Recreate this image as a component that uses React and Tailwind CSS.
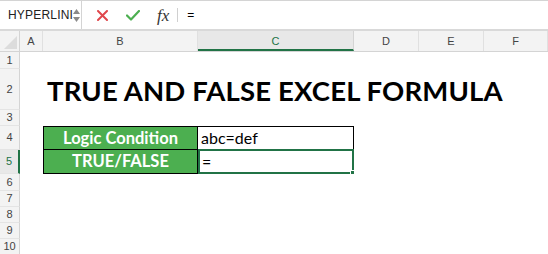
import { useState } from "react";

const cols = [
  { key: "A", w: "w-[23px]" },
  { key: "B", w: "w-[155px]" },
  { key: "C", w: "w-[156px]" },
  { key: "D", w: "w-[65px]" },
  { key: "E", w: "w-[65px]" },
  { key: "F", w: "w-[64px]" },
];

const rows = [
  { n: 1, h: "h-[17px]" },
  { n: 2, h: "h-[41px]" },
  { n: 3, h: "h-[16px]" },
  { n: 4, h: "h-[24px]" },
  { n: 5, h: "h-[24px]" },
  { n: 6, h: "h-[17px]" },
  { n: 7, h: "h-[16px]" },
  { n: 8, h: "h-[16px]" },
  { n: 9, h: "h-[16px]" },
  { n: 10, h: "h-[16px]" },
];

function FormulaBar() {
  const [value] = useState("=");

  return (
    <div className="h-[31px] border-t border-[#d4d4d4] border-b-2 border-b-[#d9d9d9] flex items-center bg-white">

      {/* NAME BOX */}
      <div className="w-[82px] h-full border-r border-[#d4d4d4] flex items-center pl-[8px] pr-[4px]">
        <span className="text-[12px] text-[#222] tracking-[0.2px]">HYPERLINI</span>
        <div className="ml-auto flex flex-col items-center gap-[3px] mr-[2px]">
          <svg width="7" height="5" viewBox="0 0 7 5"><path d="M3.5 0L7 5H0z" fill="#8a8a8a" /></svg>
          <svg width="7" height="5" viewBox="0 0 7 5"><path d="M0 0h7L3.5 5z" fill="#8a8a8a" /></svg>
        </div>
      </div>

      {/* CANCEL / ENTER / FX */}
      <div className="flex items-center h-full">
        <svg className="ml-[15px]" width="11" height="11" viewBox="0 0 11 11">
          <path d="M1 1L10 10M10 1L1 10" stroke="#e0474c" strokeWidth="2" strokeLinecap="round" />
        </svg>
        <svg className="ml-[18px]" width="14" height="11" viewBox="0 0 14 11">
          <path d="M1 5.5L5 9.5L13 1" stroke="#4caf50" strokeWidth="2.2" fill="none" strokeLinecap="round" strokeLinejoin="round" />
        </svg>
        <span className="ml-[17px] text-[17px] italic text-[#333] font-['Liberation_Serif',serif] leading-none">fx</span>
        <div className="ml-[8px] w-px h-[14px] bg-[#d0d0d0]" />
      </div>

      <span className="ml-[9px] text-[12px] text-black font-['Liberation_Sans',sans-serif]">{value}</span>
    </div>
  );
}

function ColumnHeaders() {
  return (
    <div className="flex h-[21px] bg-[#f3f3f3] border-b border-[#d4d4d4]">
      <div className="w-[20px] h-full border-r border-[#d4d4d4] relative overflow-hidden">
        <svg className="absolute right-[2px] bottom-[2px]" width="13" height="13" viewBox="0 0 13 13">
          <path d="M13 0V13H0z" fill="#dcdcdc" />
        </svg>
      </div>
      {cols.map((c) =>
        c.key === "C" ? (
          <div
            key={c.key}
            className={`${c.w} h-full flex items-center justify-center text-[11px] text-[#217346] bg-[#e8e8e8] border-r border-[#d4d4d4] border-b-2 border-b-[#217346] pt-[2px]`}
          >
            {c.key}
          </div>
        ) : (
          <div
            key={c.key}
            className={`${c.w} h-full flex items-center justify-center text-[11px] text-[#444] border-r border-[#e0e0e0]`}
          >
            {c.key}
          </div>
        )
      )}
    </div>
  );
}

function Row({ n, h, children }) {
  const active = n === 5;

  return (
    <div className={`flex ${h}`}>
      <div
        className={`w-[20px] shrink-0 h-full flex items-center justify-center text-[11px] border-b border-[#e4e4e4] ${
          active
            ? "bg-[#e8e8e8] text-[#217346] border-r-2 border-r-[#217346]"
            : "bg-[#f3f3f3] text-[#444] border-r border-r-[#d4d4d4]"
        }`}
      >
        {n}
      </div>
      <div className="flex-1 flex h-full">{children}</div>
    </div>
  );
}

function App() {

  return (
    <div className="w-[548px] h-[254px] overflow-hidden bg-white font-['Liberation_Sans',sans-serif]">

      <FormulaBar />

      <ColumnHeaders />

      {rows.map((r) => (
        <Row key={r.n} n={r.n} h={r.h}>

          {/* TITLE */}
          {r.n === 2 && (
            <div className="pl-[27px] flex items-center h-full pt-[2px]">
              <h1 className="text-[27.5px] font-bold text-black whitespace-nowrap font-['Lato',sans-serif] tracking-[0.15px]">
                TRUE AND FALSE EXCEL FORMULA
              </h1>
            </div>
          )}

          {/* TABLE */}
          {r.n === 4 && (
            <div className="flex h-full">
              <div className="w-[23px]" />
              <div className="w-[155px] bg-[#4caf50] border border-black flex items-center justify-center text-white font-bold text-[16.5px] font-['Lato',sans-serif]">
                Logic Condition
              </div>
              <div className="w-[156px] border-y border-r border-black flex items-center pl-[3px] text-[16px] text-black font-['Lato',sans-serif]">
                abc=def
              </div>
            </div>
          )}

          {r.n === 5 && (
            <div className="flex h-full">
              <div className="w-[23px]" />
              <div className="w-[155px] bg-[#4caf50] border-x border-b border-black flex items-center justify-center text-white font-bold text-[16.5px] font-['Lato',sans-serif]">
                TRUE/FALSE
              </div>
              <div className="w-[156px] relative border-2 border-[#217346] -mt-px flex items-center pl-[2px] text-[16px] text-black font-['Lato',sans-serif]">
                =
                <span className="absolute -right-[3px] -bottom-[3px] w-[5px] h-[5px] bg-[#217346] border border-white" />
              </div>
            </div>
          )}

        </Row>
      ))}

    </div>
  );
}

export default App;
